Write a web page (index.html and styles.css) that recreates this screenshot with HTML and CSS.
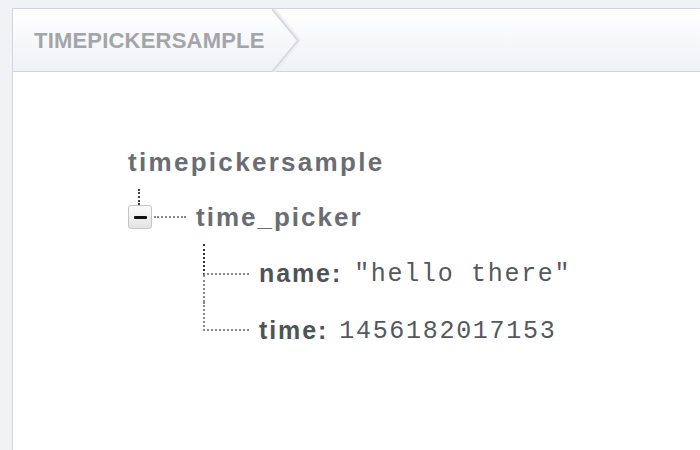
FILE: index.html
```html
<!DOCTYPE html>
<html>
<head>
<meta charset="utf-8">
<link rel="stylesheet" href="styles.css">
</head>
<body>
<div class="frame">
  <div class="header">
    <div class="crumb">TIMEPICKERSAMPLE</div>
    <svg class="chev" width="30" height="63" viewBox="0 0 30 63">
      <polyline points="1,0 27,31.5 1,63" fill="none" stroke="#eeeef2" stroke-width="4"/>
      <polyline points="0,0 26,31.5 0,63" fill="none" stroke="#d6d6dc" stroke-width="1.6"/>
    </svg>
  </div>
  <div class="content">
    <div class="tree">
      <div class="root">timepickersample</div>
      <div class="stem"></div>
      <div class="node-row">
        <span class="toggle"><span class="bar"></span></span>
        <span class="hline"></span>
        <span class="node-label">time_picker</span>
      </div>
      <ul class="children">
        <li class="child first">
          <span class="elbow"><span class="elbow-top"></span><span class="elbow-bot"></span></span>
          <span class="key">name:</span>
          <span class="val">"hello there"</span>
        </li>
        <li class="child last">
          <span class="elbow"><span class="elbow-top"></span><span class="elbow-bot"></span></span>
          <span class="key">time:</span>
          <span class="val">1456182017153</span>
        </li>
      </ul>
    </div>
  </div>
</div>
</body>
</html>
```
FILE: styles.css
```css
html, body {
  margin: 0;
  padding: 0;
  background: #f1f2f6;
  overflow: hidden;
}
body {
  width: 700px;
  height: 450px;
  padding: 8px 0 0 12px;
  box-sizing: border-box;
  font-family: "Liberation Sans", Arial, sans-serif;
}
.frame {
  border-top: 1.5px solid #d3d3e0;
  border-left: 1.5px solid #d3d3e0;
  background: #ffffff;
  height: 460px;
  width: 720px;
}
.header {
  height: 62px;
  border-bottom: 1.5px solid #d3d3e0;
  background: linear-gradient(#ffffff, #f0f1f5);
  display: flex;
  align-items: center;
}
.crumb {
  padding-left: 21px;
  font-size: 22px;
  font-weight: bold;
  color: #a2a5aa;
  letter-spacing: 0.2px;
  line-height: 26px;
  margin-top: 1px;
}
.chev {
  margin-left: 7px;
  align-self: stretch;
  height: 63px;
}
.content {
  padding: 75px 0 0 115px;
}
.tree {
  color: #6a6d72;
}
.root {
  font-size: 26px;
  font-weight: bold;
  line-height: 30px;
  letter-spacing: 2.3px;
}
.stem {
  margin: 12px 0 0 10px;
  width: 0;
  height: 16px;
  border-left: 2px dotted #444;
}
.node-row {
  display: flex;
  align-items: center;
  height: 24px;
}
.toggle {
  width: 22px;
  height: 22px;
  border: 1px solid #c4c4c4;
  border-radius: 3px;
  background: linear-gradient(#fbfbfb, #e4e4e4);
  display: flex;
  align-items: center;
  justify-content: center;
}
.bar {
  width: 13px;
  height: 3px;
  background: #111;
  border-radius: 1px;
}
.hline {
  width: 32px;
  margin-left: 2px;
  border-top: 2px dotted #888;
}
.node-label {
  margin-left: 10px;
  font-size: 26px;
  font-weight: bold;
  letter-spacing: 2px;
  line-height: 30px;
}
.children {
  list-style: none;
  margin: 15px 0 0 75px;
  padding: 0;
}
.child {
  display: flex;
  align-items: flex-start;
  height: 58px;
}
.child.last {
  height: 56px;
}
.elbow {
  display: flex;
  flex-direction: column;
  width: 46px;
  align-self: stretch;
}
.elbow-top {
  height: 31px;
  border-left: 2px dotted #888;
  border-bottom: 2px dotted #888;
  box-sizing: border-box;
}
.first .elbow-top {
  border-left-color: #333;
}
.last .elbow-top {
  height: 29px;
}
.elbow-bot {
  flex: 1;
  border-left: 2px dotted #888;
}
.last .elbow-bot {
  border-left: none;
}
.key {
  margin-left: 10px;
  font-size: 25px;
  font-weight: bold;
  color: #4f5358;
  letter-spacing: 1.9px;
  line-height: 30px;
  margin-top: 14px;
}
.val {
  margin-left: 12px;
  font-family: "Liberation Mono", "Courier New", monospace;
  font-size: 25px;
  letter-spacing: 1.7px;
  color: #55595e;
  line-height: 30px;
  margin-top: 16px;
}
.last .key {
  margin-top: 13px;
}
.last .val {
  margin-top: 15px;
  margin-left: 11px;
}
```
